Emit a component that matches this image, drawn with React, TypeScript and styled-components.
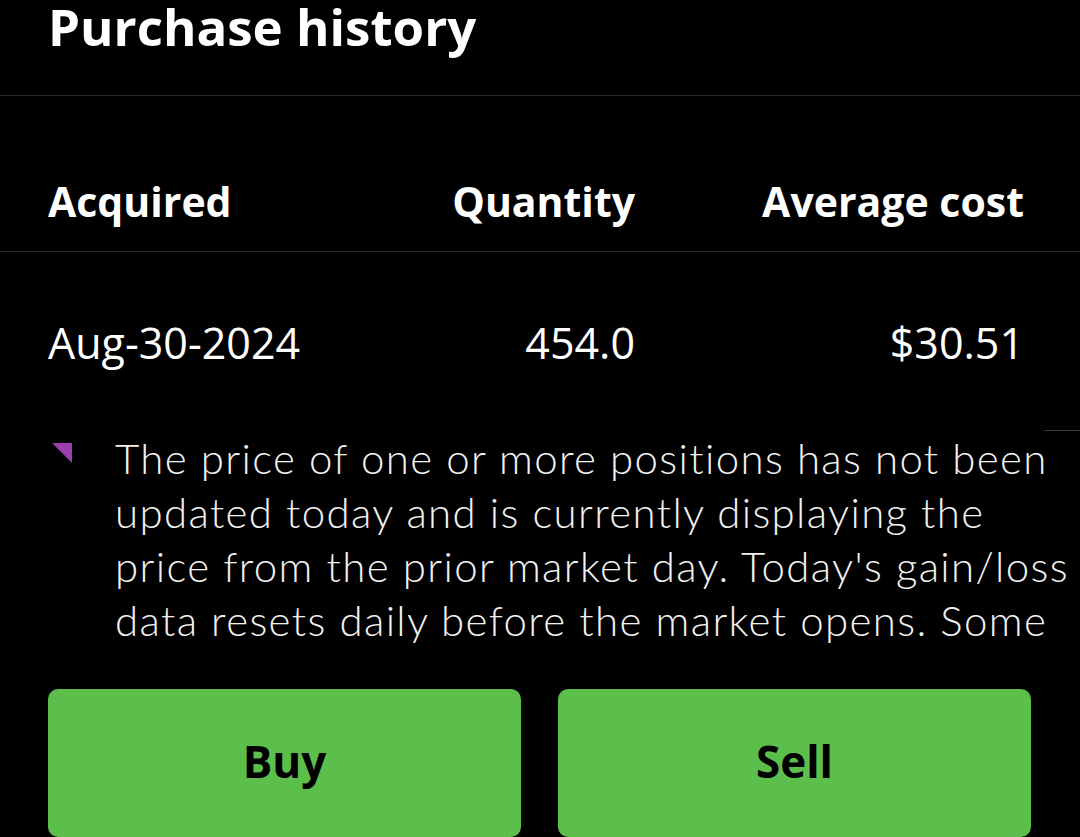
import React from 'react';
import styled, { createGlobalStyle } from 'styled-components';

const GlobalStyle = createGlobalStyle`
  html, body {
    margin: 0;
    padding: 0;
    background: #000000;
  }
  body {
    font-family: Lato, "Open Sans", sans-serif;
    color: #ffffff;
  }
`;

const Page = styled.div`
  width: 1080px;
  height: 837px;
  overflow: hidden;
  background: #000000;
  display: flex;
  flex-direction: column;
`;

const Header = styled.div`
  height: 97px;
  padding-left: 48px;
  border-bottom: 1px solid #262626;
  box-sizing: border-box;
`;

const Title = styled.h1`
  margin: 0;
  font-family: "Open Sans", sans-serif;
  font-weight: 700;
  font-size: 51px;
  line-height: 52px;
`;

const TableRow = styled.div<{ $height: number; $divider?: boolean; $padTop: number }>`
  display: grid;
  grid-template-columns: 1fr 261px 389px;
  align-items: start;
  height: ${p => p.$height}px;
  padding: ${p => p.$padTop}px 56px 0 48px;
  box-sizing: border-box;
  border-bottom: ${p => (p.$divider ? '1px solid #262626' : 'none')};
`;

const HeadCell = styled.div<{ $align?: string }>`
  font-family: "Open Sans", sans-serif;
  font-weight: 700;
  font-size: 41px;
  line-height: 50px;
  text-align: ${p => p.$align || 'left'};
`;

const DataCell = styled.div<{ $align?: string }>`
  font-family: "Open Sans", sans-serif;
  font-weight: 400;
  font-size: 43px;
  line-height: 50px;
  text-align: ${p => p.$align || 'left'};
`;

const RuleStub = styled.div`
  height: 1px;
  width: 36px;
  margin-left: auto;
  background: #3a3a3a;
`;

const Note = styled.div`
  display: flex;
  height: 216px;
  margin-bottom: 12px;
  overflow: hidden;
  padding-left: 52px;
  box-sizing: border-box;
`;

const Marker = styled.svg`
  flex: none;
  width: 20px;
  height: 20px;
  margin-top: 12px;
`;

const NoteText = styled.p`
  margin: 0 0 0 43px;
  font-family: Lato, sans-serif;
  font-weight: 300;
  font-size: 42px;
  line-height: 54px;
  letter-spacing: 1.35px;
  color: #f2f2f2;
  white-space: nowrap;
`;

const Actions = styled.div`
  display: grid;
  grid-template-columns: 473px 473px;
  column-gap: 37px;
  padding: 31px 0 0 48px;
`;

const ActionButton = styled.button`
  height: 148px;
  border: none;
  border-radius: 10px;
  background: #5cbf4c;
  color: #000000;
  font-family: "Open Sans", sans-serif;
  font-weight: 700;
  font-size: 44px;
  display: flex;
  align-items: center;
  justify-content: center;
  padding: 0 0 4px;
`;

export default function App() {
  return (
    <>
      <GlobalStyle />
      <Page>
        <Header>
          <Title>Purchase history</Title>
        </Header>
        <TableRow $height={156} $padTop={80} $divider>
          <HeadCell>Acquired</HeadCell>
          <HeadCell $align="right">Quantity</HeadCell>
          <HeadCell $align="right">Average cost</HeadCell>
        </TableRow>
        <TableRow $height={179} $padTop={66}>
          <DataCell>Aug-30-2024</DataCell>
          <DataCell $align="right">454.0</DataCell>
          <DataCell $align="right">$30.51</DataCell>
        </TableRow>
        <RuleStub />
        <Note>
          <Marker viewBox="0 0 20 20">
            <polygon points="0,0 20,0 20,20" fill="#9b3fae" />
          </Marker>
          <NoteText>
            The price of one or more positions has not been
            <br />
            updated today and is currently displaying the
            <br />
            price from the prior market day. Today's gain/loss
            <br />
            data resets daily before the market opens. Some
          </NoteText>
        </Note>
        <Actions>
          <ActionButton>Buy</ActionButton>
          <ActionButton>Sell</ActionButton>
        </Actions>
      </Page>
    </>
  );
}
